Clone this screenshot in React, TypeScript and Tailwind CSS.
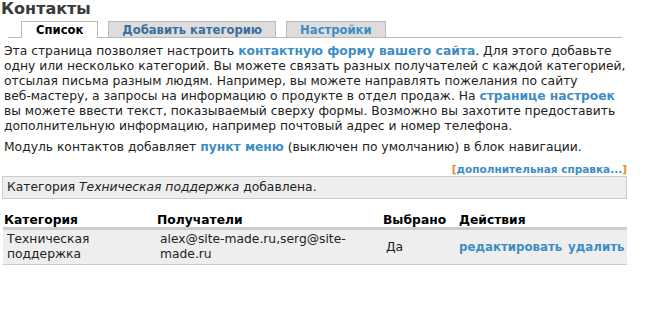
export default function App() {
  const link = "font-bold text-[#3c8dc5]";
  return (
    <div className="min-h-screen bg-white pr-[18px] font-['DejaVu_Sans',Verdana,sans-serif] text-[12.3px] leading-[15px] text-[#222]">
      <h1 className="pl-[1px] text-[16px] font-bold leading-[17px] text-[#3a3a3a]">Контакты</h1>

      {/* tabs */}
      <ul className="ml-[8px] mr-[5px] mt-[4px] flex gap-[10px] border-b border-[#bbb] pl-[13px] text-[11.6px] leading-[14px]">
        <li className="-mb-px border border-b-0 border-[#bbb] bg-white px-[13px] pt-[1px] pb-[1px] font-bold text-black">
          <span className="px-[1px]">Список</span>
        </li>
        <li className="mb-0 border border-b-0 border-[#bbb] bg-[#ddd] px-[13px] pt-[1px] font-bold text-[#3b6d9e]">
          Добавить категорию
        </li>
        <li className="mb-0 border border-b-0 border-[#bbb] bg-[#ddd] px-[13px] pt-[1px] font-bold text-[#3c8dc5]">
          Настройки
        </li>
      </ul>

      <div className="pl-[4px]">
        <p className="mt-[6px]">
          Эта страница позволяет настроить <a className={link}>контактную форму вашего сайта</a>. Для этого добавьте
          одну или несколько категорий. Вы можете связать разных получателей с каждой категорией, отсылая письма
          разным людям. Например, вы можете направлять пожелания по сайту{" "}
          <span className="whitespace-nowrap">веб-мастеру,</span> а запросы на информацию о продукте в отдел продаж.
          На <a className={link}>странице настроек</a> вы можете ввести текст, показываемый сверху формы. Возможно вы
          захотите предоставить дополнительную информацию, например почтовый адрес и номер телефона.
        </p>
        <p className="mt-[6px]">
          Модуль контактов добавляет <a className={link}>пункт меню</a> (выключен по умолчанию) в блок навигации.
        </p>
      </div>

      <div className="mt-[9px] text-right text-[10.5px] font-bold leading-[11px]">
        <span className="text-[#d98c2b]">[</span>
        <a className="text-[#3c8dc5]">дополнительная справка...</a>
        <span className="text-[#d98c2b]">]</span>
      </div>

      <div className="ml-[2px] mt-[1px] border border-[#ccc] bg-[#eee] px-[4px] py-[3px]">
        Категория <em>Техническая поддержка</em> добавлена.
      </div>

      <table className="ml-[3px] mt-[15px] w-[624px] table-fixed border-collapse text-left">
        <thead>
          <tr className="border-b-[3px] border-[#ccc]">
            <th className="w-[153px] px-[1px] font-bold leading-[13px] text-black">Категория</th>
            <th className="w-[226px] px-[1px] font-bold leading-[13px] text-black">Получатели</th>
            <th className="w-[76px] px-[1px] font-bold leading-[13px] text-black">Выбрано</th>
            <th className="px-[1px] font-bold leading-[13px] text-black">Действия</th>
          </tr>
        </thead>
        <tbody>
          <tr className="border-b border-[#ccc] bg-[#eee]">
            <td className="px-[4px] py-[2px]">Техническая поддержка</td>
            <td className="px-[4px] py-[2px]">alex@site-made.ru,serg@site-made.ru</td>
            <td className="px-[4px] py-[2px]">Да</td>
            <td className="whitespace-nowrap px-[1px] py-[2px] text-[11.8px]">
              <a className={link}>редактировать</a> <a className={`${link} ml-[2px]`}>удалить</a>
            </td>
          </tr>
        </tbody>
      </table>
    </div>
  );
}
